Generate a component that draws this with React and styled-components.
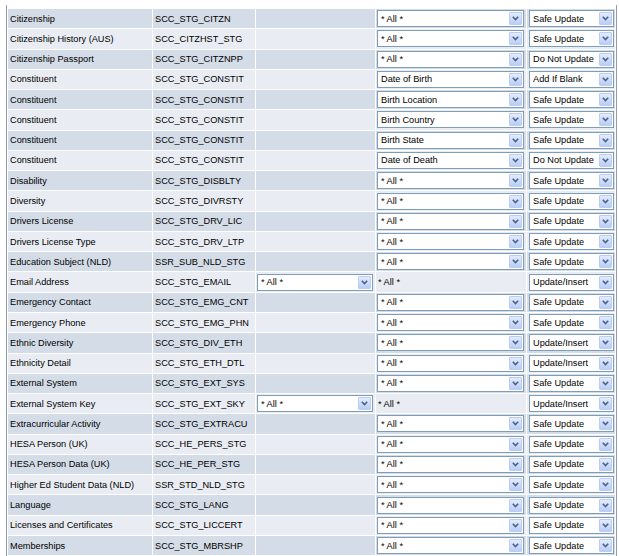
import styled, { createGlobalStyle } from 'styled-components';

const GlobalStyle = createGlobalStyle`
    html, body {
        margin: 0;
        padding: 0;
        background: #ffffff;
    }
    body {
        font-family: "Liberation Sans", Arial, sans-serif;
    }
`;

const rows = [
    ['Citizenship', 'SCC_STG_CITZN', null, '* All *', 'Safe Update'],
    ['Citizenship History (AUS)', 'SCC_CITZHST_STG', null, '* All *', 'Safe Update'],
    ['Citizenship Passport', 'SCC_STG_CITZNPP', null, '* All *', 'Do Not Update'],
    ['Constituent', 'SCC_STG_CONSTIT', null, 'Date of Birth', 'Add If Blank'],
    ['Constituent', 'SCC_STG_CONSTIT', null, 'Birth Location', 'Safe Update'],
    ['Constituent', 'SCC_STG_CONSTIT', null, 'Birth Country', 'Safe Update'],
    ['Constituent', 'SCC_STG_CONSTIT', null, 'Birth State', 'Safe Update'],
    ['Constituent', 'SCC_STG_CONSTIT', null, 'Date of Death', 'Do Not Update'],
    ['Disability', 'SCC_STG_DISBLTY', null, '* All *', 'Safe Update'],
    ['Diversity', 'SCC_STG_DIVRSTY', null, '* All *', 'Safe Update'],
    ['Drivers License', 'SCC_STG_DRV_LIC', null, '* All *', 'Safe Update'],
    ['Drivers License Type', 'SCC_STG_DRV_LTP', null, '* All *', 'Safe Update'],
    ['Education Subject (NLD)', 'SSR_SUB_NLD_STG', null, '* All *', 'Safe Update'],
    ['Email Address', 'SCC_STG_EMAIL', '* All *', '* All *', 'Update/Insert'],
    ['Emergency Contact', 'SCC_STG_EMG_CNT', null, '* All *', 'Safe Update'],
    ['Emergency Phone', 'SCC_STG_EMG_PHN', null, '* All *', 'Safe Update'],
    ['Ethnic Diversity', 'SCC_STG_DIV_ETH', null, '* All *', 'Update/Insert'],
    ['Ethnicity Detail', 'SCC_STG_ETH_DTL', null, '* All *', 'Update/Insert'],
    ['External System', 'SCC_STG_EXT_SYS', null, '* All *', 'Safe Update'],
    ['External System Key', 'SCC_STG_EXT_SKY', '* All *', '* All *', 'Update/Insert'],
    ['Extracurricular Activity', 'SCC_STG_EXTRACU', null, '* All *', 'Safe Update'],
    ['HESA Person (UK)', 'SCC_HE_PERS_STG', null, '* All *', 'Safe Update'],
    ['HESA Person Data (UK)', 'SCC_HE_PER_STG', null, '* All *', 'Safe Update'],
    ['Higher Ed Student Data (NLD)', 'SSR_STD_NLD_STG', null, '* All *', 'Safe Update'],
    ['Language', 'SCC_STG_LANG', null, '* All *', 'Safe Update'],
    ['Licenses and Certificates', 'SCC_STG_LICCERT', null, '* All *', 'Safe Update'],
    ['Memberships', 'SCC_STG_MBRSHP', null, '* All *', 'Safe Update'],
];

function DropDown({ value, width, offset }) {
    return (
        <Select $width={width} $offset={offset}>
            <span>{value}</span>
            <Arrow>
                <svg width="7" height="5" viewBox="0 0 7 5">
                    <polyline points="0.8,0.8 3.5,3.6 6.2,0.8" fill="none" stroke="#4d6185" strokeWidth="1.6" />
                </svg>
            </Arrow>
        </Select>
    );
}

function App() {
    return (
        <>
            <GlobalStyle />
            <Frame>
                <Grid>
                    <colgroup>
                        <col style={{ width: 144 }} />
                        <col style={{ width: 102 }} />
                        <col style={{ width: 119 }} />
                        <col style={{ width: 150 }} />
                        <col style={{ width: 88 }} />
                    </colgroup>
                    <tbody>
                        {rows.map(([name, table, filter, field, action], i) => (
                            <Row key={i} $odd={i % 2 === 0}>
                                <Cell>{name}</Cell>
                                <Cell>{table}</Cell>
                                <Cell $control>
                                    {filter && <DropDown value={filter} width={116} offset={1} />}
                                </Cell>
                                {filter ? (
                                    <Cell>{field}</Cell>
                                ) : (
                                    <Cell $control>
                                        <DropDown value={field} width={147} offset={1} />
                                    </Cell>
                                )}
                                <Cell $control>
                                    <DropDown value={action} width={85} offset={2} />
                                </Cell>
                            </Row>
                        ))}
                    </tbody>
                </Grid>
            </Frame>
        </>
    );
}

export default App;

const Frame = styled.div`
    margin: 5px 0 0 6px;
    width: 609px;
    padding-top: 3px;
    border-left: 1px solid #8e9bb0;
    border-right: 1px solid #8e9bb0;
`;

const Grid = styled.table`
    table-layout: fixed;
    border-collapse: separate;
    border-spacing: 1px;
    width: 609px;
    font-size: 9.2px;
    color: #000;
`;

const Row = styled.tr`
    background: ${(p) => (p.$odd ? '#d4dce7' : '#e9edf3')};
`;

const Cell = styled.td`
    height: 19.27px;
    padding: 0 0 0 ${(p) => (p.$control ? '0' : '2px')};
    box-sizing: border-box;
    white-space: nowrap;
    overflow: hidden;
    vertical-align: middle;
    line-height: 12px;
`;

const Select = styled.div`
    box-sizing: border-box;
    width: ${(p) => p.$width}px;
    height: 17px;
    margin-left: ${(p) => p.$offset}px;
    border: 1px solid #7f9db9;
    background: #ffffff;
    display: flex;
    align-items: center;
    justify-content: space-between;
    padding-left: 3px;

    span {
        font-size: 9.2px;
        white-space: nowrap;
    }
`;

const Arrow = styled.div`
    box-sizing: border-box;
    width: 13px;
    height: 13px;
    margin-right: 1px;
    border: 1px solid #bccdf3;
    border-radius: 1px;
    background: linear-gradient(#e3ebfe, #b9cdf7);
    display: flex;
    align-items: center;
    justify-content: center;
`;
